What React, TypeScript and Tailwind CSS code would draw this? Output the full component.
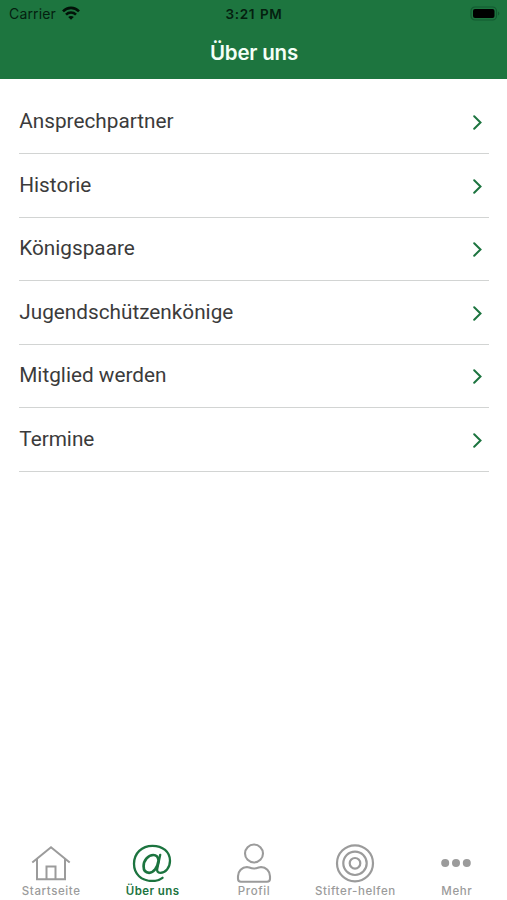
import type { ReactNode } from 'react';

const entries = [
  'Ansprechpartner',
  'Historie',
  'Königspaare',
  'Jugendschützenkönige',
  'Mitglied werden',
  'Termine',
];

function StatusBar() {
  return (
    <div className="grid h-7 grid-cols-3 items-center pl-[9px] pr-[6px] text-[#04200f]">
      <div className="flex items-center gap-[6px]">
        <span className="text-[14px] leading-7 tracking-[0.15px]">Carrier</span>
        <svg width="18" height="14" viewBox="0 0 18 14" className="mb-[2px] text-[#021208]">
          <g fill="none" stroke="currentColor" strokeWidth="2.6">
            <path d="M1 5.3C5.5 0.7 12.5 0.7 17 5.3" />
            <path d="M4 8.6C6.8 5.8 11.2 5.8 14 8.6" />
          </g>
          <path fill="currentColor" d="M9 13.8 6.2 11C7.8 9.5 10.2 9.5 11.8 11Z" />
        </svg>
      </div>
      <span className="-ml-[2px] text-center text-[13.5px] font-semibold leading-7 tracking-[0.6px] [word-spacing:1px]">3:21 PM</span>
      <svg width="31" height="15" viewBox="0 0 31 15" className="mb-px justify-self-end">
        <rect x="1" y="1" width="25.5" height="13" rx="4" fill="none" stroke="#125a30" strokeWidth="1.2" />
        <rect x="3" y="3" width="21.5" height="9" rx="2" fill="#000" />
        <path d="M28 5.5v4c1.8-.7 1.8-3.3 0-4Z" fill="#125a30" />
      </svg>
    </div>
  );
}

function HomeIcon() {
  return (
    <svg width="40" height="38" viewBox="0 0 40 38" fill="none" stroke="currentColor" strokeWidth="2">
      <path d="M1.3 18.5 20 3.2l18.7 15.3M6 15v20.3h28V15M15.5 35V22.5h9V35" />
    </svg>
  );
}

function AtIcon() {
  return (
    <svg width="40" height="38" viewBox="0 0 40 38" fill="none" stroke="currentColor" strokeLinecap="round">
      <path strokeWidth="2.3" d="M30.5 33.8C27.8 35.9 24.3 37 20.5 37 9.3 37 2 30 2 19.8 2 9.5 9.8 1.8 20.5 1.8c10.2 0 17.5 6 17.5 15 0 7.1-4.6 12-9.7 12-2.6 0-3.6-1.6-3-4.4l2.9-13.6" />
      <path strokeWidth="2.7" d="M26.6 16.5c-.4-3.5-2.3-5.5-5.3-5.5-5.1 0-9.7 5.1-9.7 11.3 0 4 2.1 6.5 5.5 6.5 4.6 0 8.5-5.4 9.5-12.3" />
    </svg>
  );
}

function ProfileIcon() {
  return (
    <svg width="40" height="40" viewBox="0 0 40 40" fill="none" stroke="currentColor" strokeWidth="2.1">
      <circle cx="20" cy="10.5" r="9" />
      <path d="M7 38.800h26c1.800 0 3-1.200 3-3v-2.500C36 27.800 32 24.200 27 24c-2 0-3.200 1.500-7 1.500s-5-1.500-7-1.500c-5 .2-9 3.800-9 9.300v2.500c0 1.800 1.200 3 3 3Z" />
    </svg>
  );
}

function TargetIcon() {
  return (
    <svg width="40" height="40" viewBox="0 0 40 40" fill="none" stroke="currentColor" strokeWidth="2.2">
      <circle cx="20" cy="20.3" r="18" />
      <circle cx="20" cy="20.3" r="11.7" />
      <circle cx="20" cy="20.3" r="5.3" />
    </svg>
  );
}

function MoreIcon() {
  return (
    <svg width="30" height="8" viewBox="0 0 30 8" fill="currentColor">
      <circle cx="4.2" cy="4" r="4" />
      <circle cx="15" cy="4" r="4" />
      <circle cx="25.8" cy="4" r="4" />
    </svg>
  );
}

function Tab({ icon, label, active = false }: { icon: ReactNode; label: string; active?: boolean }) {
  return (
    <button
      className={`flex min-w-0 flex-1 flex-col items-center ${
        active ? 'font-semibold text-[#1c743f]' : 'font-medium text-[#9b9b9b]'
      }`}
    >
      <span className="flex h-10 items-center">{icon}</span>
      <span
        className={`mt-px whitespace-nowrap pl-px text-[11.5px] leading-[14px] ${active ? 'tracking-[0.4px]' : 'tracking-[0.6px]'}`}
      >
        {label}
      </span>
    </button>
  );
}

export default function App() {
  return (
    <div className="flex h-[900px] w-[507px] flex-col overflow-hidden bg-white font-['Inter',sans-serif]">
      <header className="h-[79px] shrink-0 bg-[#1d753f]">
        <StatusBar />
        <h1 className="pl-px pt-px text-center text-[20.5px] font-semibold leading-[48px] tracking-[-0.2px] text-[#f4fff7]">Über uns</h1>
      </header>
      <ul className="ml-[19.25px] mr-[18px] mt-[11.5px] flex-1 font-['Roboto',sans-serif]">
        {entries.map((entry) => (
          <li key={entry} className="flex h-[63.5px] items-center justify-between border-b border-[#d2d4d3] pr-[7px]">
            <span className="mb-px text-[20.75px] leading-6 text-[#3b3b3b]">{entry}</span>
            <svg width="9" height="15" viewBox="0 0 9 15" fill="none" className="mt-[2px] text-[#1c743f]">
              <path d="M1.2 1.3 7.5 7.5l-6.3 6.2" stroke="currentColor" strokeWidth="2" strokeLinecap="round" />
            </svg>
          </li>
        ))}
      </ul>
      <nav className="flex h-[57px] shrink-0">
        <Tab icon={<HomeIcon />} label="Startseite" />
        <Tab icon={<AtIcon />} label="Über uns" active />
        <Tab icon={<ProfileIcon />} label="Profil" />
        <Tab icon={<TargetIcon />} label="Stifter-helfen" />
        <Tab icon={<MoreIcon />} label="Mehr" />
      </nav>
    </div>
  );
}
